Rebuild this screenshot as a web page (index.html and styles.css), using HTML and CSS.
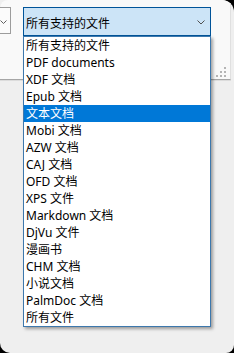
FILE: index.html
```html
<!DOCTYPE html>
<html lang="zh">
<head>
<meta charset="utf-8">
<link rel="stylesheet" href="styles.css">
</head>
<body>
<div class="window">
  <div class="toolbar">
    <div class="row">
      <div class="combo combo-side">
        <svg class="chev" width="7" height="5" viewBox="0 0 7 5"><polyline points="0.5,0.5 3.5,3.5 6.5,0.5" fill="none" stroke="#606060" stroke-width="1"/></svg>
      </div>
      <div class="combo combo-main">
        <span class="combo-text">所有支持的文件</span>
        <svg class="chev" width="8" height="5" viewBox="0 0 8 5"><polyline points="0.5,0.5 4,4 7.5,0.5" fill="none" stroke="#505050" stroke-width="1"/></svg>
      </div>
    </div>
    <div class="grip">
      <span></span><span></span><span></span><span></span><span></span><span></span>
    </div>
    <ul class="list">
      <li>所有支持的文件</li>
      <li>PDF documents</li>
      <li>XDF 文档</li>
      <li>Epub 文档</li>
      <li class="sel">文本文档</li>
      <li>Mobi 文档</li>
      <li>AZW 文档</li>
      <li>CAJ 文档</li>
      <li>OFD 文档</li>
      <li>XPS 文件</li>
      <li>Markdown 文档</li>
      <li>DjVu 文件</li>
      <li>漫画书</li>
      <li>CHM 文档</li>
      <li>小说文档</li>
      <li>PalmDoc 文档</li>
      <li>所有文件</li>
    </ul>
  </div>
</div>
</body>
</html>
```
FILE: styles.css
```css
html, body {
  margin: 0;
  padding: 0;
  background: #000;
  width: 234px;
  height: 353px;
  overflow: hidden;
  font-family: "Noto Sans", "Noto Sans CJK SC", sans-serif;
  font-size: 12px;
  color: #000;
}
.window {
  width: 234px;
  height: 353px;
  background: #efefef;
  border-radius: 0 12px 8px 10px;
  overflow: hidden;
}
.toolbar {
  position: relative;
  width: 230px;
  height: 79px;
  background: #f9f9f9;
  border-right: 1px solid #e0e0e0;
  border-bottom: 1px solid #a6a6a6;
  border-top-left-radius: 8px;
  box-shadow: 0 1px 0 #dcdcdc;
}
.row {
  display: flex;
  align-items: flex-start;
  padding-top: 7px;
  gap: 12px;
}
.combo {
  box-sizing: border-box;
  display: flex;
  align-items: center;
}
.combo-side {
  width: 40px;
  margin-left: -29px;
  height: 27px;
  background: #fbfbfb;
  border: 1px solid #9c9c9c;
  justify-content: flex-end;
  padding-right: 3px;
  padding-top: 3px;
}
.combo-main {
  width: 188px;
  height: 29px;
  background: #cce4f7;
  border: 1px solid #005499;
  justify-content: space-between;
  padding: 2px 5px 0 2px;
}
.combo-text {
  line-height: 17px;
  padding-top: 1px;
}
.grip {
  position: absolute;
  right: 4px;
  bottom: 2px;
  width: 11px;
  height: 11px;
}
.grip span {
  position: absolute;
  width: 2px;
  height: 2px;
  background: #b4b4b4;
}
.grip span:nth-child(1) { right: 0; bottom: 0; }
.grip span:nth-child(2) { right: 4px; bottom: 0; }
.grip span:nth-child(3) { right: 8px; bottom: 0; }
.grip span:nth-child(4) { right: 0; bottom: 4px; }
.grip span:nth-child(5) { right: 4px; bottom: 4px; }
.grip span:nth-child(6) { right: 0; bottom: 8px; }
.list {
  position: absolute;
  left: 23px;
  top: 36px;
  width: 188px;
  box-sizing: border-box;
  margin: 0;
  padding: 0;
  list-style: none;
  background: #fff;
  border: 1px solid #3d78ad;
  box-shadow: 2px 2px 3px rgba(0, 0, 0, 0.35);
  z-index: 2;
}
.list li {
  height: 17px;
  line-height: 17px;
  padding-left: 2px;
  white-space: nowrap;
}
.list li.sel {
  background: #0078d7;
  color: #fff;
}
```
